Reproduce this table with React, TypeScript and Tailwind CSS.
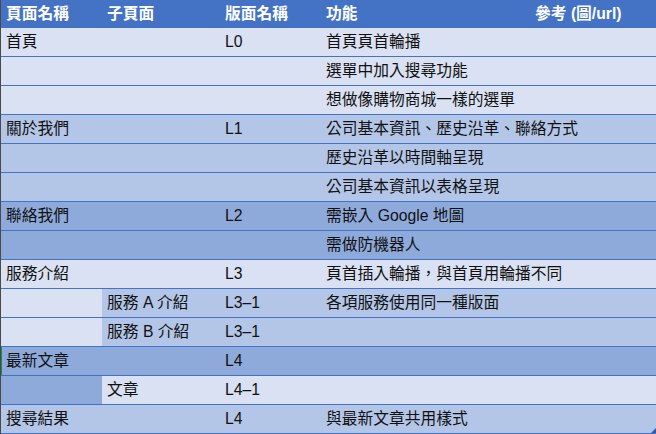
import React from 'react';

type Row = {
  page: string;
  sub: string;
  layout: string;
  feature: string;
  bg: string;
  firstBg?: string;
  mark?: boolean;
};

const LIGHT = 'bg-[#d9e1f2]';
const MID = 'bg-[#b4c6e7]';
const DARK = 'bg-[#8eaadb]';

const rows: Row[] = [
  { page: '首頁', sub: '', layout: 'L0', feature: '首頁頁首輪播', bg: LIGHT },
  { page: '', sub: '', layout: '', feature: '選單中加入搜尋功能', bg: LIGHT },
  { page: '', sub: '', layout: '', feature: '想做像購物商城一樣的選單', bg: LIGHT },
  { page: '關於我們', sub: '', layout: 'L1', feature: '公司基本資訊、歷史沿革、聯絡方式', bg: MID },
  { page: '', sub: '', layout: '', feature: '歷史沿革以時間軸呈現', bg: MID },
  { page: '', sub: '', layout: '', feature: '公司基本資訊以表格呈現', bg: MID },
  { page: '聯絡我們', sub: '', layout: 'L2', feature: '需嵌入 Google 地圖', bg: DARK },
  { page: '', sub: '', layout: '', feature: '需做防機器人', bg: DARK },
  { page: '服務介紹', sub: '', layout: 'L3', feature: '頁首插入輪播，與首頁用輪播不同', bg: LIGHT },
  { page: '', sub: '服務 A 介紹', layout: 'L3–1', feature: '各項服務使用同一種版面', bg: MID, firstBg: LIGHT },
  { page: '', sub: '服務 B 介紹', layout: 'L3–1', feature: '', bg: MID, firstBg: LIGHT },
  { page: '最新文章', sub: '', layout: 'L4', feature: '', bg: DARK, mark: true },
  { page: '', sub: '文章', layout: 'L4–1', feature: '', bg: LIGHT, firstBg: DARK },
  { page: '搜尋結果', sub: '', layout: 'L4', feature: '與最新文章共用樣式', bg: MID },
];

const cols = 'grid grid-cols-[101px_118px_101px_209px_1fr]';

export default function App() {
  return (
    <div
      className="relative w-[656px] h-[434px] overflow-hidden bg-[#d9e1f2] text-[15.75px] text-[#111] border-l border-[#4a4a4a]"
      style={{ fontFamily: '"Liberation Sans", "Noto Sans CJK TC", sans-serif' }}
    >
      {/* Header */}
      <div className={`${cols} h-[28px] bg-[#4472c4] font-bold text-white items-center`}>
        <div className="pl-[5px]">頁面名稱</div>
        <div className="pl-[5px]">子頁面</div>
        <div className="pl-[5px]">版面名稱</div>
        <div className="pl-[5px]">功能</div>
        <div className="pl-[5px]">參考 (圖/url)</div>
      </div>

      {rows.map((r, i) => (
        <div key={i} className={`${cols} relative h-[29px] border-b border-[#4472c4] ${r.bg}`}>
          {r.mark && <div className="absolute left-[-1px] top-0 bottom-0 w-[2px] bg-[#1e8a4a]" />}
          <div className={`flex items-center pl-[5px] ${r.firstBg ?? ''}`}>{r.page}</div>
          <div className="flex items-center pl-[5px]">{r.sub}</div>
          <div className="flex items-center pl-[5px]">{r.layout}</div>
          <div className="flex items-center pl-[5px] whitespace-nowrap">{r.feature}</div>
          <div />
        </div>
      ))}

      {/* resize handle */}
      <svg className="absolute right-0 bottom-[1px]" width="5" height="5" viewBox="0 0 5 5">
        <polygon points="5,0 5,5 0,5" fill="#3b55a8" />
      </svg>
    </div>
  );
}
